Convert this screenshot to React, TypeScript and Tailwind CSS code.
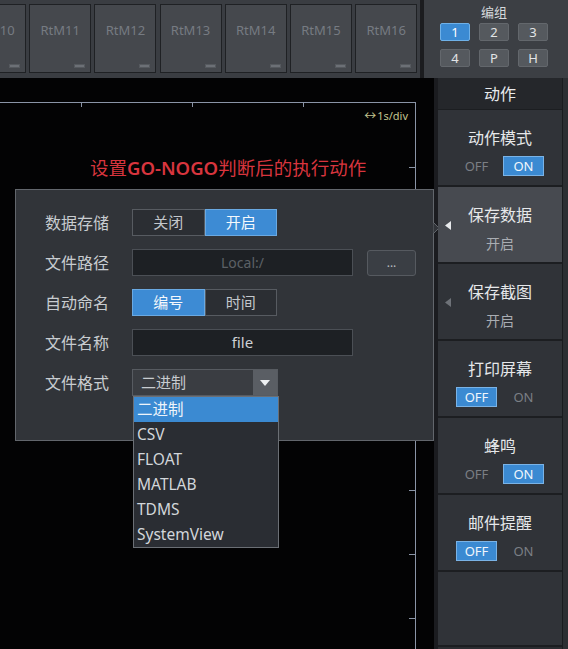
import React from "react";

const FONT = { fontFamily: '"Noto Sans", "Noto Sans CJK SC", sans-serif' };

function RtmButton({ label, first }: { label: string; first?: boolean }) {
  return (
    <div
      className={
        "relative w-[62px] h-[69px] shrink-0 bg-[#45484d] border border-[#1f2124] flex items-start justify-center pt-[15px] " +
        (first ? "ml-[-36px]" : "")
      }
    >
      <span className="text-[13px] leading-[20px] text-[#767b82]">{label}</span>
      <div className="absolute right-[5px] bottom-[4px] w-[11px] h-[4px] bg-[#6c7076] border border-[#55595e]" />
    </div>
  );
}

function GroupBtn({ label, active }: { label: string; active?: boolean }) {
  return (
    <div
      className={
        "w-[30px] h-[18px] rounded-[2px] flex items-center justify-center text-[13px] leading-none " +
        (active
          ? "bg-[#3b8ad2] text-white border border-[#6fb1e8]"
          : "bg-[#55595e] text-[#e2e4e6] border border-[#63676c]")
      }
    >
      {label}
    </div>
  );
}

function Toggle({ on }: { on: boolean }) {
  const active = "w-[41px] h-[20px] flex items-center justify-center bg-[#3b8ad2] border border-[#7ab3e6] text-[#f0f6fc]";
  const idle = "w-[41px] h-[20px] flex items-center justify-center text-[#7b7f85]";
  return (
    <div className="flex gap-[6px] text-[13px] leading-none">
      <div className={on ? idle : active}>OFF</div>
      <div className={on ? active : idle}>ON</div>
    </div>
  );
}

function ActionItem({
  title,
  children,
  selected,
  arrow,
}: {
  title: string;
  children: React.ReactNode;
  selected?: boolean;
  arrow?: "white" | "gray";
}) {
  return (
    <div
      className={
        "relative h-[77px] shrink-0 flex flex-col items-center pt-[18px] gap-[8px] border-b-2 border-[#1c1e21] " +
        (selected ? "bg-[#474a50]" : "bg-[#303338]")
      }
    >
      {arrow && (
        <svg className="absolute left-[7px] top-[34px]" width="6" height="9" viewBox="0 0 6 9">
          <polygon points="6,0 6,9 0,4.5" fill={arrow === "white" ? "#e8eaec" : "#6e7278"} />
        </svg>
      )}
      <div className="text-[16px] leading-[20px] text-[#e6e8ea]">{title}</div>
      <div className="h-[20px] flex items-center">{children}</div>
    </div>
  );
}

function Segmented({ left, right, active }: { left: string; right: string; active: "left" | "right" }) {
  const on = "bg-[#3d8bd4] text-[#f4f8fc] border border-[#6aa9e2]";
  const off = "bg-[#2b2e33] text-[#c3c7cb] border border-[#575b61]";
  return (
    <div className="flex w-[145px] h-[27px] text-[15px] leading-none">
      <div className={"flex-1 flex items-center justify-center " + (active === "left" ? on : off)}>{left}</div>
      <div className={"flex-1 flex items-center justify-center " + (active === "right" ? on : off)}>{right}</div>
    </div>
  );
}

function Row({ label, children }: { label: string; children: React.ReactNode }) {
  return (
    <div className="flex items-center h-[27px]">
      <div className="w-[116px] pl-[29px] text-[16px] leading-none text-[#c8ccd0]">{label}</div>
      {children}
    </div>
  );
}

export default function App() {
  const vTicks = [64, 129, 193, 258, 322, 387, 451, 515];
  const hTicks = [81, 192, 303];
  const formats = ["二进制", "CSV", "FLOAT", "MATLAB", "TDMS", "SystemView"];
  return (
    <div className="w-[568px] h-[649px] bg-black flex flex-col overflow-hidden" style={FONT}>
      {/* top row */}
      <div className="flex h-[78px] shrink-0">
        <div className="w-[420px] bg-[#3a3d42] overflow-hidden flex items-start pt-[4px] gap-[3.2px]">
          <RtmButton label="RtM10" first />
          <RtmButton label="RtM11" />
          <RtmButton label="RtM12" />
          <RtmButton label="RtM13" />
          <RtmButton label="RtM14" />
          <RtmButton label="RtM15" />
          <RtmButton label="RtM16" />
        </div>
        <div className="w-[4px] bg-[#1b1c1f]" />
        <div className="flex-1 bg-[#3c3f44] flex flex-col items-center pt-[4px] pr-[4px]">
          <div className="text-[13px] leading-[17px] text-[#d6d9dc] mb-[2px]">编组</div>
          <div className="grid grid-cols-3 gap-x-[9px] gap-y-[8px]">
            <GroupBtn label="1" active />
            <GroupBtn label="2" />
            <GroupBtn label="3" />
            <GroupBtn label="4" />
            <GroupBtn label="P" />
            <GroupBtn label="H" />
          </div>
        </div>
      </div>

      {/* bottom row */}
      <div className="flex flex-1 min-h-0">
        {/* main display */}
        <div className="relative w-[434px] bg-[#030304] pt-[24px]">
          <div className="relative w-[416px] h-full border-t border-r border-[#8a94a6] flex flex-col">
            {hTicks.map((x) => (
              <div key={x} className="absolute top-0 w-px h-[4px] bg-[#8a94a6]" style={{ left: x }} />
            ))}
            {vTicks.map((y) => (
              <div key={y} className="absolute right-0 h-px w-[6px] bg-[#8a94a6]" style={{ top: y }} />
            ))}
            <div className="self-end mr-[7px] mt-[6px] text-[11px] leading-[14px] text-[#c2c48e] flex items-center">
              <span className="text-[12px] mr-[1px]">↔</span>1s/div
            </div>
            <div className="ml-[90px] mt-[34px] text-[18.5px] leading-[22px] text-[#d8353e]">
              设置<span className="font-semibold">GO-NOGO</span>判断后的执行动作
            </div>
          </div>

          {/* dialog overlay */}
          <div className="absolute left-[15px] top-[111px] w-[419px] h-[252px] bg-[#313439] border border-[#62666c] pt-[19px] flex flex-col gap-[13px]">
            <svg className="absolute right-[-7px] top-[32px]" width="7" height="12" viewBox="0 0 7 12">
              <polygon points="0,0 6,6 0,12" fill="#313439" stroke="#62666c" strokeWidth="1" />
            </svg>
            <Row label="数据存储">
              <Segmented left="关闭" right="开启" active="right" />
            </Row>
            <Row label="文件路径">
              <div className="w-[221px] h-[27px] bg-[#1d2024] border border-[#4b4f55] flex items-center justify-center text-[14px] text-[#5c6066]">
                Local:/
              </div>
              <div className="ml-[14px] w-[49px] h-[26px] rounded-[3px] bg-[#3a3e44] border border-[#565a60] flex items-center justify-center text-[12px] text-[#b8bcc0] leading-none">
                ...
              </div>
            </Row>
            <Row label="自动命名">
              <Segmented left="编号" right="时间" active="left" />
            </Row>
            <Row label="文件名称">
              <div className="w-[221px] h-[27px] bg-[#1d2024] border border-[#4b4f55] flex items-center justify-center text-[15px] text-[#cdd1d5]">
                file
              </div>
            </Row>
            <Row label="文件格式">
              <div className="relative w-[146px] h-[27px] bg-[#3a3d42] border border-[#575b61] flex items-center">
                <span className="pl-[8px] flex-1 text-[15px] leading-none text-[#c8ccd0]">二进制</span>
                <div className="w-[24px] h-full bg-[#5a5e64] flex items-center justify-center">
                  <svg width="10" height="6" viewBox="0 0 10 6">
                    <polygon points="0,0 10,0 5,6" fill="#eef0f2" />
                  </svg>
                </div>
                {/* dropdown list */}
                <div className="absolute left-0 top-[26px] w-[146px] bg-[#2a2d33] border border-[#6b6f75] z-10 flex flex-col">
                  {formats.map((f, i) => (
                    <div
                      key={f}
                      className={
                        "h-[25px] pl-[3px] flex items-center text-[15.5px] leading-none " +
                        (i === 0 ? "bg-[#3b8ad2] text-[#eef4fa] h-[24px]" : "text-[#d2d6da]")
                      }
                    >
                      {f}
                    </div>
                  ))}
                </div>
              </div>
            </Row>
          </div>
        </div>

        <div className="w-[4px] bg-[#1b1c20]" />

        {/* right action panel */}
        <div className="w-[125px] flex flex-col bg-[#2b2d31] border-r border-[#1a1c1f]">
          <div className="h-[32px] shrink-0 bg-[#25272b] flex items-center justify-center text-[16px] text-[#e8eaec] border-b border-[#1c1e21]">
            动作
          </div>
          <ActionItem title="动作模式">
            <Toggle on />
          </ActionItem>
          <ActionItem title="保存数据" selected arrow="white">
            <span className="text-[14px] text-[#a9adb2]">开启</span>
          </ActionItem>
          <ActionItem title="保存截图" arrow="gray">
            <span className="text-[14px] text-[#a9adb2]">开启</span>
          </ActionItem>
          <ActionItem title="打印屏幕">
            <Toggle on={false} />
          </ActionItem>
          <ActionItem title="蜂鸣">
            <Toggle on />
          </ActionItem>
          <ActionItem title="邮件提醒">
            <Toggle on={false} />
          </ActionItem>
          <div className="h-[75px] shrink-0 bg-[#303338] border-b-2 border-[#1c1e21]" />
          <div className="flex-1 bg-[#2b2d31]" />
        </div>
        <div className="flex-1 bg-[#2c2f33]" />
      </div>
    </div>
  );
}
